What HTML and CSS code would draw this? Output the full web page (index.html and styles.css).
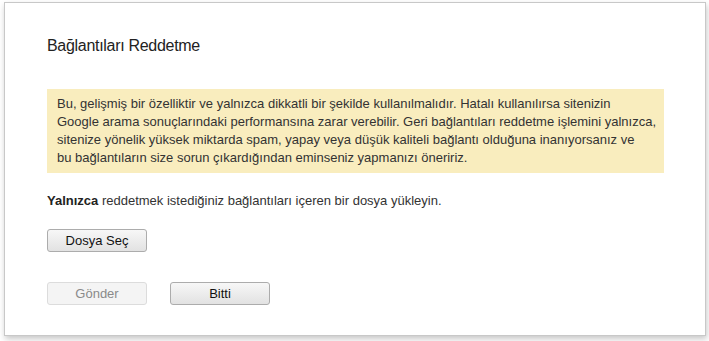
FILE: index.html
```html
<!DOCTYPE html>
<html lang="tr">
<head>
<meta charset="utf-8">
<title>Bağlantıları Reddetme</title>
<link rel="stylesheet" href="styles.css">
</head>
<body>
<div class="dialog">
  <h1 class="title">Bağlantıları Reddetme</h1>
  <div class="warning">Bu, gelişmiş bir özelliktir ve yalnızca dikkatli bir şekilde kullanılmalıdır. Hatalı kullanılırsa sitenizin<br>Google arama sonuçlarındaki performansına zarar verebilir. Geri bağlantıları reddetme işlemini yalnızca,<br>sitenize yönelik yüksek miktarda spam, yapay veya düşük kaliteli bağlantı olduğuna inanıyorsanız ve<br>bu bağlantıların size sorun çıkardığından eminseniz yapmanızı öneririz.</div>
  <p class="instr"><b>Yalnızca</b> reddetmek istediğiniz bağlantıları içeren bir dosya yükleyin.</p>
  <div class="file-row"><button class="btn">Dosya Seç</button></div>
  <div class="actions">
    <button class="btn disabled" disabled>Gönder</button>
    <button class="btn">Bitti</button>
  </div>
</div>
</body>
</html>
```
FILE: styles.css
```css
html, body {
  margin: 0;
  padding: 0;
  background: #fff;
}
body {
  font-family: "Liberation Sans", Arial, sans-serif;
  color: #222;
  padding: 2px 0 0 4px;
  height: 341px;
  box-sizing: border-box;
  overflow: hidden;
}
.dialog {
  width: 702px;
  height: 334px;
  box-sizing: border-box;
  border: 1px solid #c8c8c8;
  background: #fff;
  box-shadow: 1px 3px 6px rgba(0, 0, 0, 0.22);
  padding: 33px 0 0 42px;
}
.title {
  margin: 0;
  font-size: 16px;
  font-weight: normal;
  line-height: 20px;
  letter-spacing: -0.3px;
  color: #222;
}
.warning {
  margin-top: 33px;
  width: 617px;
  box-sizing: border-box;
  background: #f9edbe;
  padding: 6px 10px;
  font-size: 13px;
  line-height: 18px;
  color: #333;
  white-space: nowrap;
}
.instr {
  margin: 19px 0 0;
  font-size: 13px;
  line-height: 18px;
  color: #333;
}
.instr b {
  color: #222;
}
.file-row {
  margin-top: 19px;
}
.actions {
  margin-top: 30px;
  display: flex;
  gap: 23px;
}
.btn {
  width: 100px;
  height: 23px;
  box-sizing: border-box;
  border: 1px solid #acacac;
  border-radius: 3px;
  background: linear-gradient(#f7f7f7, #e2e2e2);
  font-family: "Liberation Sans", Arial, sans-serif;
  font-size: 13px;
  color: #111;
  padding: 0;
  margin: 0;
  line-height: 21px;
}
.btn.disabled {
  background: #f4f4f4;
  border-color: #dcdcdc;
  color: #8a8a8a;
}
```
